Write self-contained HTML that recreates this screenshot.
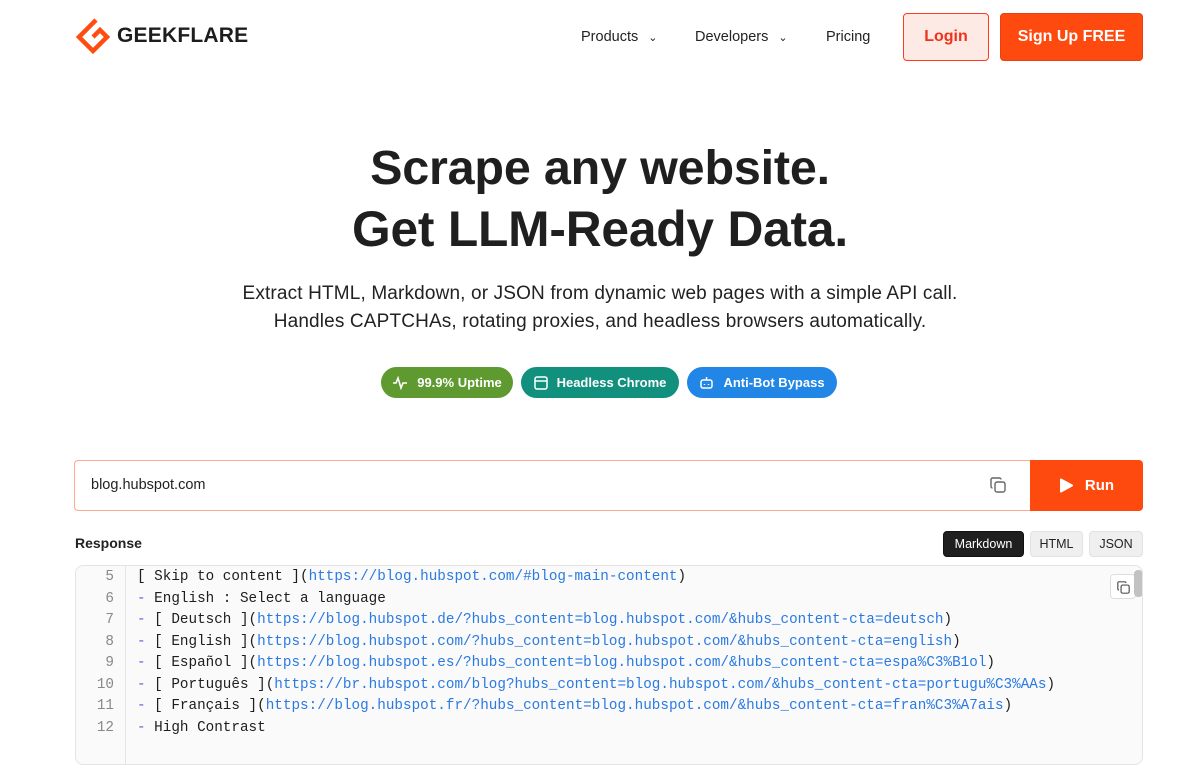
<!DOCTYPE html>
<html><head><meta charset="utf-8"><style>
*{box-sizing:border-box;margin:0;padding:0}
body{width:1200px;height:736px;overflow:hidden;background:#fff;font-family:"Liberation Sans",sans-serif;color:#1d1d1f;position:relative}
.abs{position:absolute}
.nav{font-size:14.5px;color:#222;top:29px}
.btn{position:absolute;border-radius:4px;display:flex;align-items:center;justify-content:center;font-size:16px;font-weight:bold}
h1{position:absolute;top:138px;left:0;width:1200px;text-align:center;font-weight:bold;color:#1f1f1f;letter-spacing:-0.2px}
h1 div{height:61px;line-height:61px}
.sub{position:absolute;top:280px;width:1200px;text-align:center;font-size:19px;line-height:28px;color:#222;letter-spacing:0.15px}
.pill{position:absolute;top:367px;height:31px;border-radius:16px;color:#fff;font-size:13px;font-weight:bold;display:flex;align-items:center;justify-content:center;gap:9px}
.code{position:absolute;left:75px;top:565px;width:1068px;height:200px;background:#fafafa;border:1px solid #e4e4e4;border-radius:8px;overflow:hidden}
.ln{position:absolute;left:0;top:0;width:50px;border-right:1px solid #e4e4e4;height:100%}
.l{font-family:"Liberation Mono",monospace;font-size:14.3px;line-height:21.5px;white-space:pre;height:21.5px}
.nums .l{text-align:right;padding-right:11px;color:#888}
.txt{position:absolute;left:61px;top:1px}
.u{color:#2a7ae2}.d{color:#6b5bd6}
.fmt{position:absolute;top:531px;height:26px;border-radius:4px;font-size:12.5px;display:flex;align-items:center;justify-content:center;background:#efefef;border:1px solid #e2e2e2;color:#222}
</style></head><body>
<svg class="abs" style="left:0;top:0" width="120" height="60" viewBox="0 0 120 60"><path d="M96 20 L79 37 L93 51 L107 37 L100 30 L93 37" fill="none" stroke="#ff4d12" stroke-width="4.5" stroke-linejoin="miter"/></svg>
<div class="abs" style="left:117px;top:24px;font-size:21px;font-weight:bold;letter-spacing:0.2px;color:#1d1d1f">GEEKFLARE</div>
<div class="abs nav" style="left:581px">Products <span style="font-size:11px;margin-left:6px">&#8964;</span></div>
<div class="abs nav" style="left:695px">Developers <span style="font-size:11px;margin-left:6px">&#8964;</span></div>
<div class="abs nav" style="left:826px">Pricing</div>
<div class="btn" style="left:903px;top:13px;width:86px;height:48px;background:#feeae4;border:1.5px solid #ff3b1f;color:#f0321c">Login</div>
<div class="btn" style="left:1000px;top:13px;width:143px;height:48px;background:#ff4a0f;color:#fff;border:1px solid #e84010">Sign Up FREE</div>
<h1><div style="font-size:48.5px">Scrape any website.</div><div style="font-size:49.7px">Get LLM-Ready Data.</div></h1>
<div class="sub">Extract HTML, Markdown, or JSON from dynamic web pages with a simple API call.<br>Handles CAPTCHAs, rotating proxies, and headless browsers automatically.</div>
<div class="pill" style="left:381px;width:132px;background:#5e9a30"><svg width="16" height="14" viewBox="0 0 16 14" fill="none" stroke="#fff" stroke-width="1.6"><path d="M1 7h3l2-5 3 10 2-5h4"/></svg>99.9% Uptime</div>
<div class="pill" style="left:521px;width:158px;background:#12907e"><svg width="14" height="14" viewBox="0 0 14 14" fill="none" stroke="#fff" stroke-width="1.5"><rect x="1" y="1" width="12" height="12" rx="2"/><path d="M1 5h12"/></svg>Headless Chrome</div>
<div class="pill" style="left:687px;width:150px;background:#2186e5"><svg width="15" height="14" viewBox="0 0 15 14" fill="none" stroke="#fff" stroke-width="1.5"><rect x="2" y="4" width="11" height="8" rx="2"/><path d="M7.5 1v3M5.5 8v1M9.5 8v1"/></svg>Anti-Bot Bypass</div>
<div class="abs" style="left:74px;top:460px;width:957px;height:51px;border:1.5px solid #ffa98f;border-right:none;border-radius:4px 0 0 4px"></div>
<div class="abs" style="left:91px;top:477px;font-size:14.5px;color:#222">blog.hubspot.com</div>
<svg class="abs" style="left:990px;top:477px" width="16" height="16" viewBox="0 0 16 16" fill="none" stroke="#666" stroke-width="1.4"><rect x="5" y="5" width="10" height="10" rx="2"/><path d="M11 2.5A1.5 1.5 0 0 0 9.5 1h-7A1.5 1.5 0 0 0 1 2.5v7A1.5 1.5 0 0 0 2.5 11"/></svg>
<div class="btn" style="left:1030px;top:460px;width:113px;height:51px;background:#ff4a0f;color:#fff;font-size:15px;gap:12px;border-radius:0 4px 4px 0"><svg width="14" height="15" viewBox="0 0 14 15"><path d="M2 1.5 L13 7.5 L2 13.5Z" fill="#fff" stroke="#fff" stroke-linejoin="round" stroke-width="2"/></svg>Run</div>
<div class="abs" style="left:75px;top:535px;font-size:14px;font-weight:bold;color:#222">Response</div>
<div class="fmt" style="left:943px;width:81px;background:#1f1f1f;color:#fff;border-color:#111">Markdown</div>
<div class="fmt" style="left:1030px;width:53px">HTML</div>
<div class="fmt" style="left:1089px;width:54px">JSON</div>
<div class="code">
<div class="ln nums" style="padding-top:1px"><div class="l">5</div><div class="l">6</div><div class="l">7</div><div class="l">8</div><div class="l">9</div><div class="l">10</div><div class="l">11</div><div class="l">12</div></div>
<div class="txt">
<div class="l">[ Skip to content ](<span class="u">https://blog.hubspot.com/#blog-main-content</span>)</div>
<div class="l"><span class="d">-</span> English : Select a language</div>
<div class="l"><span class="d">-</span> [ Deutsch ](<span class="u">https://blog.hubspot.de/?hubs_content=blog.hubspot.com/&amp;hubs_content-cta=deutsch</span>)</div>
<div class="l"><span class="d">-</span> [ English ](<span class="u">https://blog.hubspot.com/?hubs_content=blog.hubspot.com/&amp;hubs_content-cta=english</span>)</div>
<div class="l"><span class="d">-</span> [ Español ](<span class="u">https://blog.hubspot.es/?hubs_content=blog.hubspot.com/&amp;hubs_content-cta=espa%C3%B1ol</span>)</div>
<div class="l"><span class="d">-</span> [ Português ](<span class="u">https://br.hubspot.com/blog?hubs_content=blog.hubspot.com/&amp;hubs_content-cta=portugu%C3%AAs</span>)</div>
<div class="l"><span class="d">-</span> [ Français ](<span class="u">https://blog.hubspot.fr/?hubs_content=blog.hubspot.com/&amp;hubs_content-cta=fran%C3%A7ais</span>)</div>
<div class="l"><span class="d">-</span> High Contrast</div>
</div>
<div class="abs" style="left:1034px;top:8px;width:26px;height:25px;border:1px solid #ddd;border-radius:4px;background:#fff"><svg style="position:absolute;left:6px;top:6px" width="13" height="13" viewBox="0 0 16 16" fill="none" stroke="#555" stroke-width="1.5"><rect x="5" y="5" width="10" height="10" rx="2"/><path d="M11 2.5A1.5 1.5 0 0 0 9.5 1h-7A1.5 1.5 0 0 0 1 2.5v7A1.5 1.5 0 0 0 2.5 11"/></svg></div>
<div class="abs" style="left:1058px;top:4px;width:9px;height:27px;border-radius:4px;background:#c2c2c2"></div>
</div>
</body></html>
